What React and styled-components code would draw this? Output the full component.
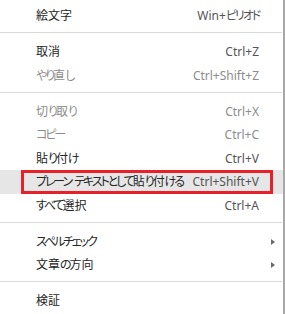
import React from "react";
import styled, { createGlobalStyle } from "styled-components";

const GlobalStyle = createGlobalStyle`
  html, body {
    margin: 0;
    padding: 0;
    background: #ffffff;
  }
  body {
    font-family: "Noto Sans", "Noto Sans CJK JP", sans-serif;
  }
`;

const Menu = styled.div`
  width: 283px;
  height: 314px;
  box-sizing: content-box;
  background: #ffffff;
  border-right: 2px solid #a8a8a8;
  padding-top: 4.25px;
  overflow: hidden;
`;

const Row = styled.div`
  position: relative;
  display: grid;
  grid-template-columns: minmax(0, 1fr) auto 24px;
  align-items: center;
  height: 23.5px;
  padding-left: 36px;
  font-size: 12px;
  line-height: 23.5px;
  color: ${(p) => (p.disabled ? "#8c8c8c" : "#262626")};
  background: ${(p) => (p.hovered ? "#e6e6e6" : "transparent")};
  white-space: nowrap;
`;

const Label = styled.span`
  font-feature-settings: "palt";
`;

// Meiryo UI style narrow kana
const Kana = styled.span`
  letter-spacing: -2.1px;
`;

const Shortcut = styled.span`
  font-feature-settings: "palt";
  color: ${(p) => (p.disabled ? "#8c8c8c" : "#555555")};
`;

const Arrow = styled.span`
  justify-self: end;
  margin-right: 8px;
  width: 0;
  height: 0;
  border-top: 3.5px solid transparent;
  border-bottom: 3.5px solid transparent;
  border-left: 4px solid #6a6a6a;
`;

const Separator = styled.div`
  height: 12.5px;
  display: flex;
  flex-direction: column;
  &::after {
    content: "";
    margin-top: 4.5px;
    width: 282px;
    height: 1px;
    background: #d9d9d9;
  }
`;

const Callout = styled.div`
  position: absolute;
  left: 21px;
  top: 0;
  width: 252px;
  height: 24px;
  box-sizing: border-box;
  border: 3.5px solid #e8202a;
  pointer-events: none;
`;

const narrow = (text) =>
  (text || "")
    .split(/([\u3040-\u30ff]+)/)
    .map((part, i) =>
      /^[\u3040-\u30ff]+$/.test(part) ? <Kana key={i}>{part}</Kana> : part
    );

const Item = ({ label, shortcut, disabled, submenu, hovered, marked }) => (
  <Row disabled={disabled} hovered={hovered}>
    <Label>{narrow(label)}</Label>
    <Shortcut disabled={disabled}>{narrow(shortcut)}</Shortcut>
    {submenu ? <Arrow /> : <span />}
    {marked && <Callout />}
  </Row>
);

export default function App() {
  return (
    <>
      <GlobalStyle />
      <Menu>
        <Item label="絵文字" shortcut="Win+ピリオド" />
        <Separator />
        <Item label="取消" shortcut="Ctrl+Z" />
        <Item label="やり直し" shortcut="Ctrl+Shift+Z" disabled />
        <Separator />
        <Item label="切り取り" shortcut="Ctrl+X" disabled />
        <Item label="コピー" shortcut="Ctrl+C" disabled />
        <Item label="貼り付け" shortcut="Ctrl+V" />
        <Item
          label="プレーン テキストとして貼り付ける"
          shortcut="Ctrl+Shift+V"
          hovered
          marked
        />
        <Item label="すべて選択" shortcut="Ctrl+A" />
        <Separator />
        <Item label="スペルチェック" submenu />
        <Item label="文章の方向" submenu />
        <Separator />
        <Item label="検証" />
      </Menu>
    </>
  );
}
